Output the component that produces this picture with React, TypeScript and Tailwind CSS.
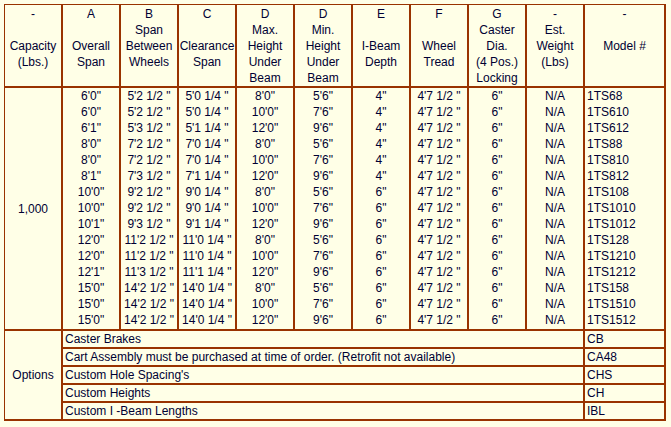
import React from "react";

const headers: string[][] = [
  ["-", "", "Capacity", "(Lbs.)", ""],
  ["A", "", "Overall", "Span", ""],
  ["B", "Span", "Between", "Wheels", ""],
  ["C", "", "Clearance", "Span", ""],
  ["D", "Max.", "Height", "Under", "Beam"],
  ["D", "Min.", "Height", "Under", "Beam"],
  ["E", "", "I-Beam", "Depth", ""],
  ["F", "", "Wheel", "Tread", ""],
  ["G", "Caster", "Dia.", "(4 Pos.)", "Locking"],
  ["-", "Est.", "Weight", "(Lbs)", ""],
  ["-", "", "Model #", "", ""],
];

const rows = [
  ["6'0\"", "5'2 1/2 \"", "5'0 1/4 \"", "8'0\"", "5'6\"", "4\"", "1TS68"],
  ["6'0\"", "5'2 1/2 \"", "5'0 1/4 \"", "10'0\"", "7'6\"", "4\"", "1TS610"],
  ["6'1\"", "5'3 1/2 \"", "5'1 1/4 \"", "12'0\"", "9'6\"", "4\"", "1TS612"],
  ["8'0\"", "7'2 1/2 \"", "7'0 1/4 \"", "8'0\"", "5'6\"", "4\"", "1TS88"],
  ["8'0\"", "7'2 1/2 \"", "7'0 1/4 \"", "10'0\"", "7'6\"", "4\"", "1TS810"],
  ["8'1\"", "7'3 1/2 \"", "7'1 1/4 \"", "12'0\"", "9'6\"", "4\"", "1TS812"],
  ["10'0\"", "9'2 1/2 \"", "9'0 1/4 \"", "8'0\"", "5'6\"", "6\"", "1TS108"],
  ["10'0\"", "9'2 1/2 \"", "9'0 1/4 \"", "10'0\"", "7'6\"", "6\"", "1TS1010"],
  ["10'1\"", "9'3 1/2 \"", "9'1 1/4 \"", "12'0\"", "9'6\"", "6\"", "1TS1012"],
  ["12'0\"", "11'2 1/2 \"", "11'0 1/4 \"", "8'0\"", "5'6\"", "6\"", "1TS128"],
  ["12'0\"", "11'2 1/2 \"", "11'0 1/4 \"", "10'0\"", "7'6\"", "6\"", "1TS1210"],
  ["12'1\"", "11'3 1/2 \"", "11'1 1/4 \"", "12'0\"", "9'6\"", "6\"", "1TS1212"],
  ["15'0\"", "14'2 1/2 \"", "14'0 1/4 \"", "8'0\"", "5'6\"", "6\"", "1TS158"],
  ["15'0\"", "14'2 1/2 \"", "14'0 1/4 \"", "10'0\"", "7'6\"", "6\"", "1TS1510"],
  ["15'0\"", "14'2 1/2 \"", "14'0 1/4 \"", "12'0\"", "9'6\"", "6\"", "1TS1512"],
];

// one cell per column, values stacked line by line
const columns: string[][] = [
  rows.map((r) => r[0]),
  rows.map((r) => r[1]),
  rows.map((r) => r[2]),
  rows.map((r) => r[3]),
  rows.map((r) => r[4]),
  rows.map((r) => r[5]),
  rows.map(() => "4'7 1/2 \""),
  rows.map(() => "6\""),
  rows.map(() => "N/A"),
];

const options = [
  ["Caster Brakes", "CB"],
  ["Cart Assembly must be purchased at time of order. (Retrofit not available)", "CA48"],
  ["Custom Hole Spacing's", "CHS"],
  ["Custom Heights", "CH"],
  ["Custom I -Beam Lengths", "IBL"],
];

const cell = "border-r-2 border-b-2 border-[#993300] p-0";

export default function App() {
  return (
    <div className="min-h-[427px] bg-[#ffffe7] pl-[4px] pt-[4px] font-['Liberation_Sans',Arial,sans-serif] text-[12px] leading-[16px] text-[#000033]">
      <table className="table-fixed border-separate border-spacing-0 border-l border-t border-[#993300] w-[662px]">
        <colgroup>
          {Array.from({ length: 10 }).map((_, i) => (
            <col key={i} className="w-[58px]" />
          ))}
          <col className="w-[81px]" />
        </colgroup>
        <tbody>
          <tr>
            {headers.map((h, i) => (
              <td key={i} className={`${cell} h-[83px] pt-px align-top text-center`}>
                {h.map((line, j) => (
                  <div key={j} className="h-[16px] whitespace-nowrap">
                    {line}
                  </div>
                ))}
              </td>
            ))}
          </tr>
          <tr>
            <td className={`${cell} h-[243px] text-center align-middle`}>1,000</td>
            {columns.map((col, i) => (
              <td key={i} className={`${cell} align-top text-center`}>
                {col.map((v, j) => (
                  <div key={j} className="h-[16px] whitespace-nowrap">
                    {v}
                  </div>
                ))}
              </td>
            ))}
            <td className={`${cell} align-top pl-[2px]`}>
              {rows.map((r, j) => (
                <div key={j} className="h-[16px] whitespace-nowrap">
                  {r[6]}
                </div>
              ))}
            </td>
          </tr>
          {options.map(([label, code], i) => (
            <tr key={i}>
              {i === 0 && (
                <td rowSpan={5} className={`${cell} text-center align-middle`}>
                  Options
                </td>
              )}
              <td colSpan={9} className={`${cell} h-[18px] pl-[2px] align-middle whitespace-nowrap`}>
                {label}
              </td>
              <td className={`${cell} pl-[2px] align-middle`}>{code}</td>
            </tr>
          ))}
        </tbody>
      </table>
    </div>
  );
}
